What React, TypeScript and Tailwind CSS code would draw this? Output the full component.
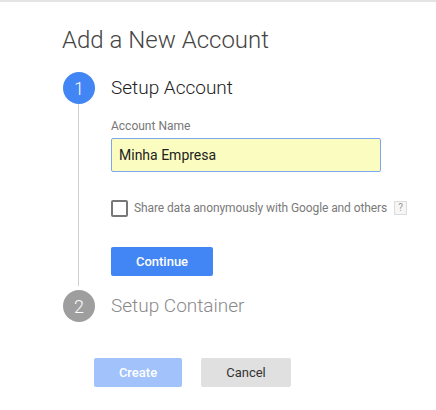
import React from "react";

export default function App() {
  return (
    <div
      className="w-[436px] h-[410px] bg-white border-t-2 border-[#e4e4e4] overflow-hidden"
      style={{ fontFamily: "Roboto, 'Liberation Sans', sans-serif" }}
    >
      <div className="pl-[62px] pt-[22px]">
        <h1 className="text-[24px] leading-[32px] font-light text-[#444]">Add a New Account</h1>
      </div>
      <div className="pl-[63px] mt-[16px] grid grid-cols-[32px_1fr] gap-x-[16px]">
        <div className="w-[32px] h-[32px] rounded-full bg-[#4285f4] text-white flex items-center justify-center text-[18px] font-light">
          1
        </div>
        <div className="text-[19px] leading-[32px] font-light text-[#212121]">Setup Account</div>

        <div className="flex justify-center">
          <div className="w-px bg-[#cfcfcf] mr-[1px]" />
        </div>
        <div className="pt-[14px] pb-[10px] flex flex-col items-start">
          <label className="text-[12px] leading-[16px] text-[#777]">Account Name</label>
          <div className="mt-[4px] w-[270px] h-[34px] rounded-[2px] border border-[#7ba7f2] bg-[#fafdbf] flex items-center pl-[7px] text-[14px] text-[#222]">
            Minha Empresa
          </div>
          <div className="mt-[27px] flex items-center h-[18px]">
            <div className="w-[17px] h-[17px] border-2 border-[#777] rounded-[2px]" />
            <span className="ml-[6px] text-[12px] tracking-[-0.1px] text-[#7a7a7a]">
              Share data anonymously with Google and others
            </span>
            <span className="ml-[7px] w-[13px] h-[14px] border border-[#dcdcdc] bg-[#f6f6f6] text-[10px] leading-[12px] text-[#9a9a9a] flex items-center justify-center">
              ?
            </span>
          </div>
          <button className="mt-[30px] w-[102px] h-[29px] rounded-[2px] bg-[#4285f4] text-white text-[13px] font-medium">
            Continue
          </button>
        </div>

        <div className="mt-[4px] w-[32px] h-[32px] rounded-full bg-[#9e9e9e] text-white flex items-center justify-center text-[18px] font-light">
          2
        </div>
        <div className="mt-[4px] text-[19px] leading-[32px] font-light text-[#8a8a8a]">Setup Container</div>
      </div>
      <div className="pl-[94px] mt-[36px] flex gap-[19px]">
        <button className="w-[88px] h-[29px] rounded-[2px] bg-[#a1c2fa] text-white text-[13px] font-medium">
          Create
        </button>
        <button className="w-[90px] h-[29px] rounded-[2px] bg-[#e0e0e0] text-[#333] text-[13px]">
          Cancel
        </button>
      </div>
    </div>
  );
}
